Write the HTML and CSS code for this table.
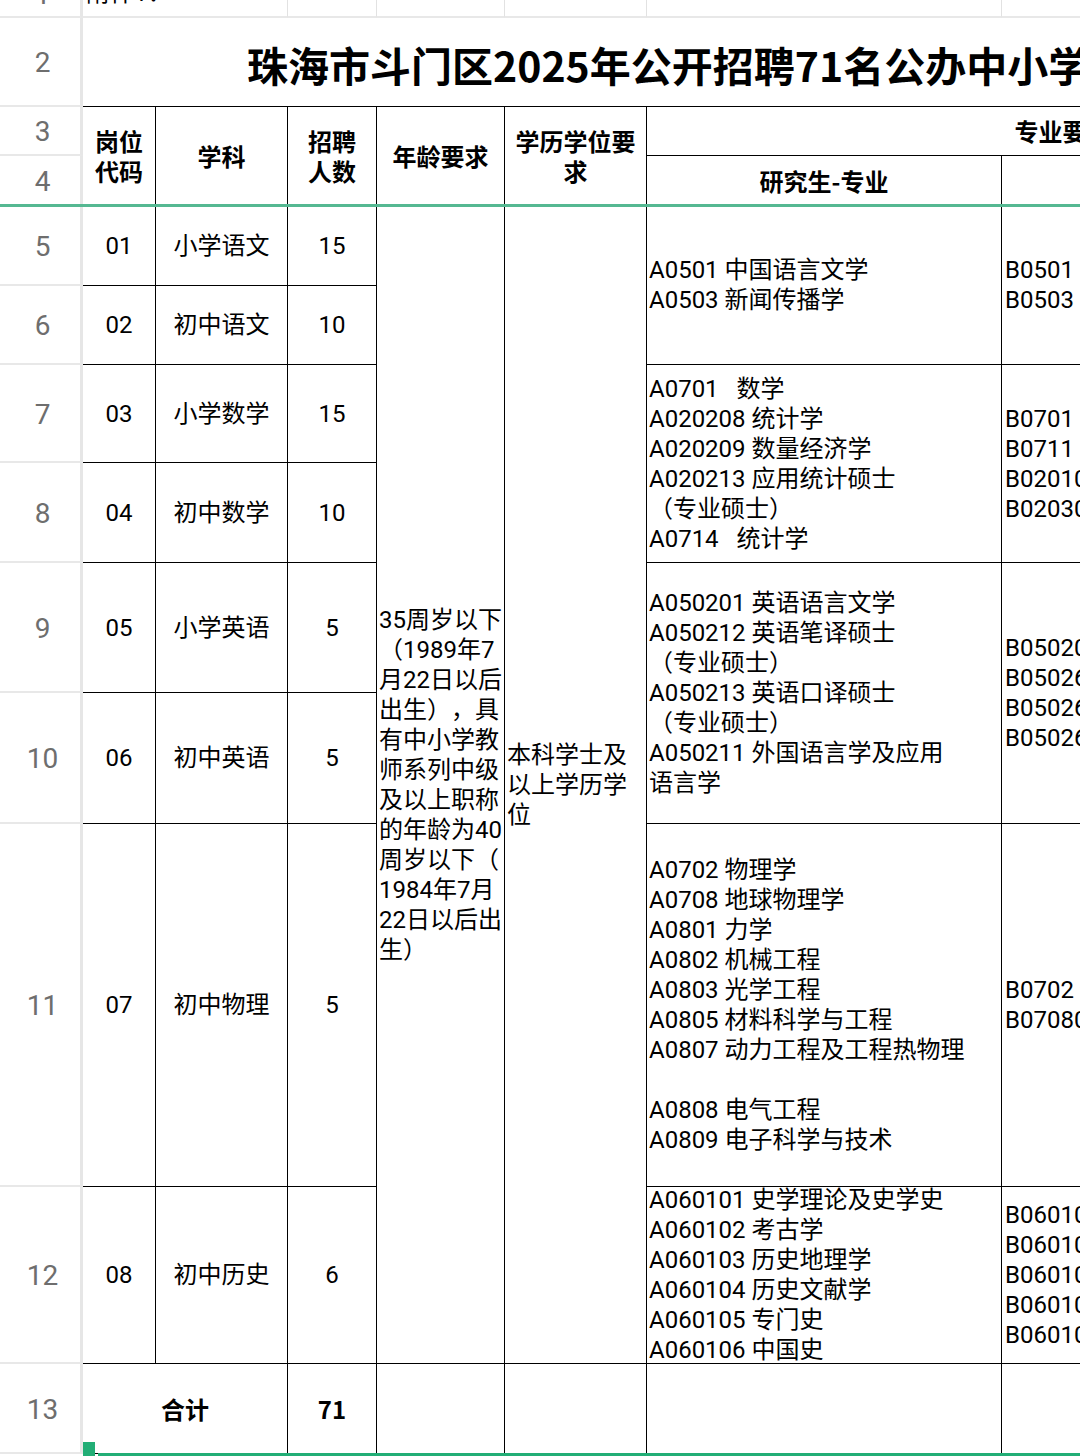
FILE: index.html
```html
<!DOCTYPE html>
<html lang="zh-CN">
<head>
<meta charset="utf-8">
<title>珠海市斗门区2025年公开招聘71名公办中小学教师岗位表</title>
<link rel="stylesheet" href="styles.css">
</head>
<body>
<div class="viewport">
  <div class="sheet">
    <!-- row headers -->
    <div class="rh r1">1</div>
    <div class="rh r2">2</div>
    <div class="rh r3">3</div>
    <div class="rh r4">4</div>
    <div class="rh r5">5</div>
    <div class="rh r6">6</div>
    <div class="rh r7">7</div>
    <div class="rh r8">8</div>
    <div class="rh r9">9</div>
    <div class="rh r10">10</div>
    <div class="rh r11">11</div>
    <div class="rh r12">12</div>
    <div class="rh r13">13</div>

    <!-- row 1 -->
    <div class="lt r1 cA-B note">附件1：</div>
    <div class="lt r1 cC"></div>
    <div class="lt r1 cD"></div>
    <div class="lt r1 cE"></div>
    <div class="lt r1 cF"></div>
    <div class="lt r1 cG"></div>

    <!-- row 2 title -->
    <div class="title r2">珠海市斗门区2025年公开招聘71名公办中小学教师（编制内）岗位表</div>

    <!-- rows 3-4 header -->
    <div class="c hd ctr r3-4 cA">岗位<br>代码</div>
    <div class="c hd ctr r3-4 cB">学科</div>
    <div class="c hd ctr r3-4 cC">招聘<br>人数</div>
    <div class="c hd ctr r3-4 cD">年龄要求</div>
    <div class="c hd ctr r3-4 cE">学历学位要<br>求</div>
    <div class="c hd ctr r3 cF-G">专业要求</div>
    <div class="c hd ctr r4 cF">研究生-专业</div>
    <div class="c hd ctr r4 cG">本科-专业</div>

    <!-- rows 5-12 -->
    <div class="c ctr r5 cA">01</div>
    <div class="c ctr r5 cB">小学语文</div>
    <div class="c ctr r5 cC">15</div>
    <div class="c ctr r6 cA">02</div>
    <div class="c ctr r6 cB">初中语文</div>
    <div class="c ctr r6 cC">10</div>
    <div class="c ctr r7 cA">03</div>
    <div class="c ctr r7 cB">小学数学</div>
    <div class="c ctr r7 cC">15</div>
    <div class="c ctr r8 cA">04</div>
    <div class="c ctr r8 cB">初中数学</div>
    <div class="c ctr r8 cC">10</div>
    <div class="c ctr r9 cA">05</div>
    <div class="c ctr r9 cB">小学英语</div>
    <div class="c ctr r9 cC">5</div>
    <div class="c ctr r10 cA">06</div>
    <div class="c ctr r10 cB">初中英语</div>
    <div class="c ctr r10 cC">5</div>
    <div class="c ctr r11 cA">07</div>
    <div class="c ctr r11 cB">初中物理</div>
    <div class="c ctr r11 cC">5</div>
    <div class="c ctr r12 cA">08</div>
    <div class="c ctr r12 cB">初中历史</div>
    <div class="c ctr r12 cC">6</div>

    <div class="c lft r5-12 cD"><div>35周岁以下<br>（1989年7<br>月22日以后<br>出生），具<br>有中小学教<br>师系列中级<br>及以上职称<br>的年龄为40<br>周岁以下（<br>1984年7月<br>22日以后出<br>生）</div></div>
    <div class="c lft r5-12 cE"><div>本科学士及<br>以上学历学<br>位</div></div>

    <div class="c lft r5-6 cF"><div>A0501 中国语言文学<br>A0503 新闻传播学</div></div>
    <div class="c lft r5-6 cG"><div>B0501 中国语言文学<br>B0503 新闻传播学类</div></div>

    <div class="c lft r7-8 cF"><div>A0701   数学<br>A020208 统计学<br>A020209 数量经济学<br>A020213 应用统计硕士<br>（专业硕士）<br>A0714   统计学</div></div>
    <div class="c lft r7-8 cG"><div>B0701 数学类<br>B0711 统计学类<br>B020102 经济统计学<br>B020305 金融数学</div></div>

    <div class="c lft r9-10 cF"><div>A050201 英语语言文学<br>A050212 英语笔译硕士<br>（专业硕士）<br>A050213 英语口译硕士<br>（专业硕士）<br>A050211 外国语言学及应用<br>语言学</div></div>
    <div class="c lft r9-10 cG"><div>B050201 英语<br>B050261 翻译<br>B050262 商务英语<br>B050263 英语教育</div></div>

    <div class="c lft r11 cF"><div>A0702 物理学<br>A0708 地球物理学<br>A0801 力学<br>A0802 机械工程<br>A0803 光学工程<br>A0805 材料科学与工程<br>A0807 动力工程及工程热物理<br><br>A0808 电气工程<br>A0809 电子科学与技术</div></div>
    <div class="c lft r11 cG"><div>B0702 物理学类<br>B070801 地球物理学</div></div>

    <div class="c lft r12 cF"><div>A060101 史学理论及史学史<br>A060102 考古学<br>A060103 历史地理学<br>A060104 历史文献学<br>A060105 专门史<br>A060106 中国史</div></div>
    <div class="c lft r12 cG"><div>B060101 历史学<br>B060102 世界史<br>B060103 考古学<br>B060104 文物与博物馆学<br>B060105 文物保护技术</div></div>

    <!-- row 13 -->
    <div class="c hd ctr r13 cA-B">合计</div>
    <div class="c hd ctr r13 cC">71</div>
    <div class="c r13 cD"></div>
    <div class="c r13 cE"></div>
    <div class="c r13 cF"></div>
    <div class="c r13 cG"></div>

    <!-- overlays -->
    <div class="freeze"></div>
    <div class="sel-line"></div>
    <div class="sel-handle"></div>
  </div>
</div>
</body>
</html>
```

FILE: styles.css
```css
* { box-sizing: border-box; }

html, body {
  margin: 0;
  padding: 0;
  background: #ffffff;
}

body {
  font-family: Roboto, "Noto Sans CJK SC", sans-serif;
  color: #000;
  text-spacing-trim: space-all;
}

.viewport {
  width: 1080px;
  height: 1456px;
  overflow: hidden;
}

.sheet {
  display: grid;
  grid-template-columns: 83px 73px 132px 89px 128px 142px 355px 477px;
  grid-template-rows: 48px 89px 49px 50px 80px 79px 98px 100px 130px 131px 363px 177px 90px 2px;
  width: max-content;
  margin-top: -30px;
}

/* row placement */
.r1 { grid-row: 1; }
.r2 { grid-row: 2; }
.r3 { grid-row: 3; }
.r4 { grid-row: 4; }
.r5 { grid-row: 5; }
.r6 { grid-row: 6; }
.r7 { grid-row: 7; }
.r8 { grid-row: 8; }
.r9 { grid-row: 9; }
.r10 { grid-row: 10; }
.r11 { grid-row: 11; }
.r12 { grid-row: 12; }
.r13 { grid-row: 13; }
.r3-4 { grid-row: 3 / 5; }
.r5-6 { grid-row: 5 / 7; }
.r7-8 { grid-row: 7 / 9; }
.r9-10 { grid-row: 9 / 11; }
.r5-12 { grid-row: 5 / 13; }

/* column placement */
.cA { grid-column: 2; }
.cB { grid-column: 3; }
.cC { grid-column: 4; }
.cD { grid-column: 5; }
.cE { grid-column: 6; }
.cF { grid-column: 7; }
.cG { grid-column: 8; }
.cA-B { grid-column: 2 / 4; }
.cF-G { grid-column: 7 / 9; }

/* row header */
.rh {
  grid-column: 1;
  display: flex;
  align-items: center;
  justify-content: center;
  padding-left: 5px;
  padding-top: 2px;
  font-family: Roboto, "Noto Sans", sans-serif;
  font-size: 28px;
  color: #6e6e6e;
  background: #fff;
  border-right: 3px solid #e6e6e6;
  border-bottom: 2px solid #e8e8e8;
}

/* light grid (row 1) */
.lt {
  border-right: 1px solid #e2e2e2;
  border-bottom: 2px solid #e8e8e8;
}

.note {
  display: flex;
  align-items: center;
  padding-left: 3px;
  font-size: 24px;
  line-height: 30px;
  white-space: nowrap;
  overflow: visible;
}

/* title */
.title {
  grid-column: 2 / -1;
  display: flex;
  align-items: center;
  padding-left: 164px;
  padding-top: 3px;
  font-family: "Noto Sans CJK SC", sans-serif;
  font-weight: 700;
  font-size: 41px;
  white-space: nowrap;
  overflow: hidden;
  border-bottom: 1px solid #000;
}

/* data cells */
.c {
  display: flex;
  align-items: center;
  font-size: 24px;
  line-height: 30px;
  white-space: pre;
  border-right: 1px solid #000;
  border-bottom: 1px solid #000;
}

.ctr {
  justify-content: center;
  text-align: center;
}

.lft {
  justify-content: flex-start;
  text-align: left;
  padding-left: 2px;
}

.cG.lft { padding-left: 3px; }

.hd {
  font-family: "Noto Sans CJK SC", sans-serif;
  font-weight: 700;
}

/* spreadsheet overlays */
.freeze {
  grid-row: 5;
  grid-column: 1 / -1;
  align-self: start;
  height: 3px;
  margin-top: -2px;
  background: #55b892;
}

.sel-line {
  grid-row: 14;
  grid-column: 2 / -1;
  margin-left: 15px;
  margin-top: -1px;
  height: 3px;
  background: #22ae76;
}

.sel-handle {
  grid-row: 13 / 15;
  grid-column: 2;
  align-self: end;
  justify-self: start;
  width: 12px;
  height: 14px;
  background: #22ae76;
}
```
